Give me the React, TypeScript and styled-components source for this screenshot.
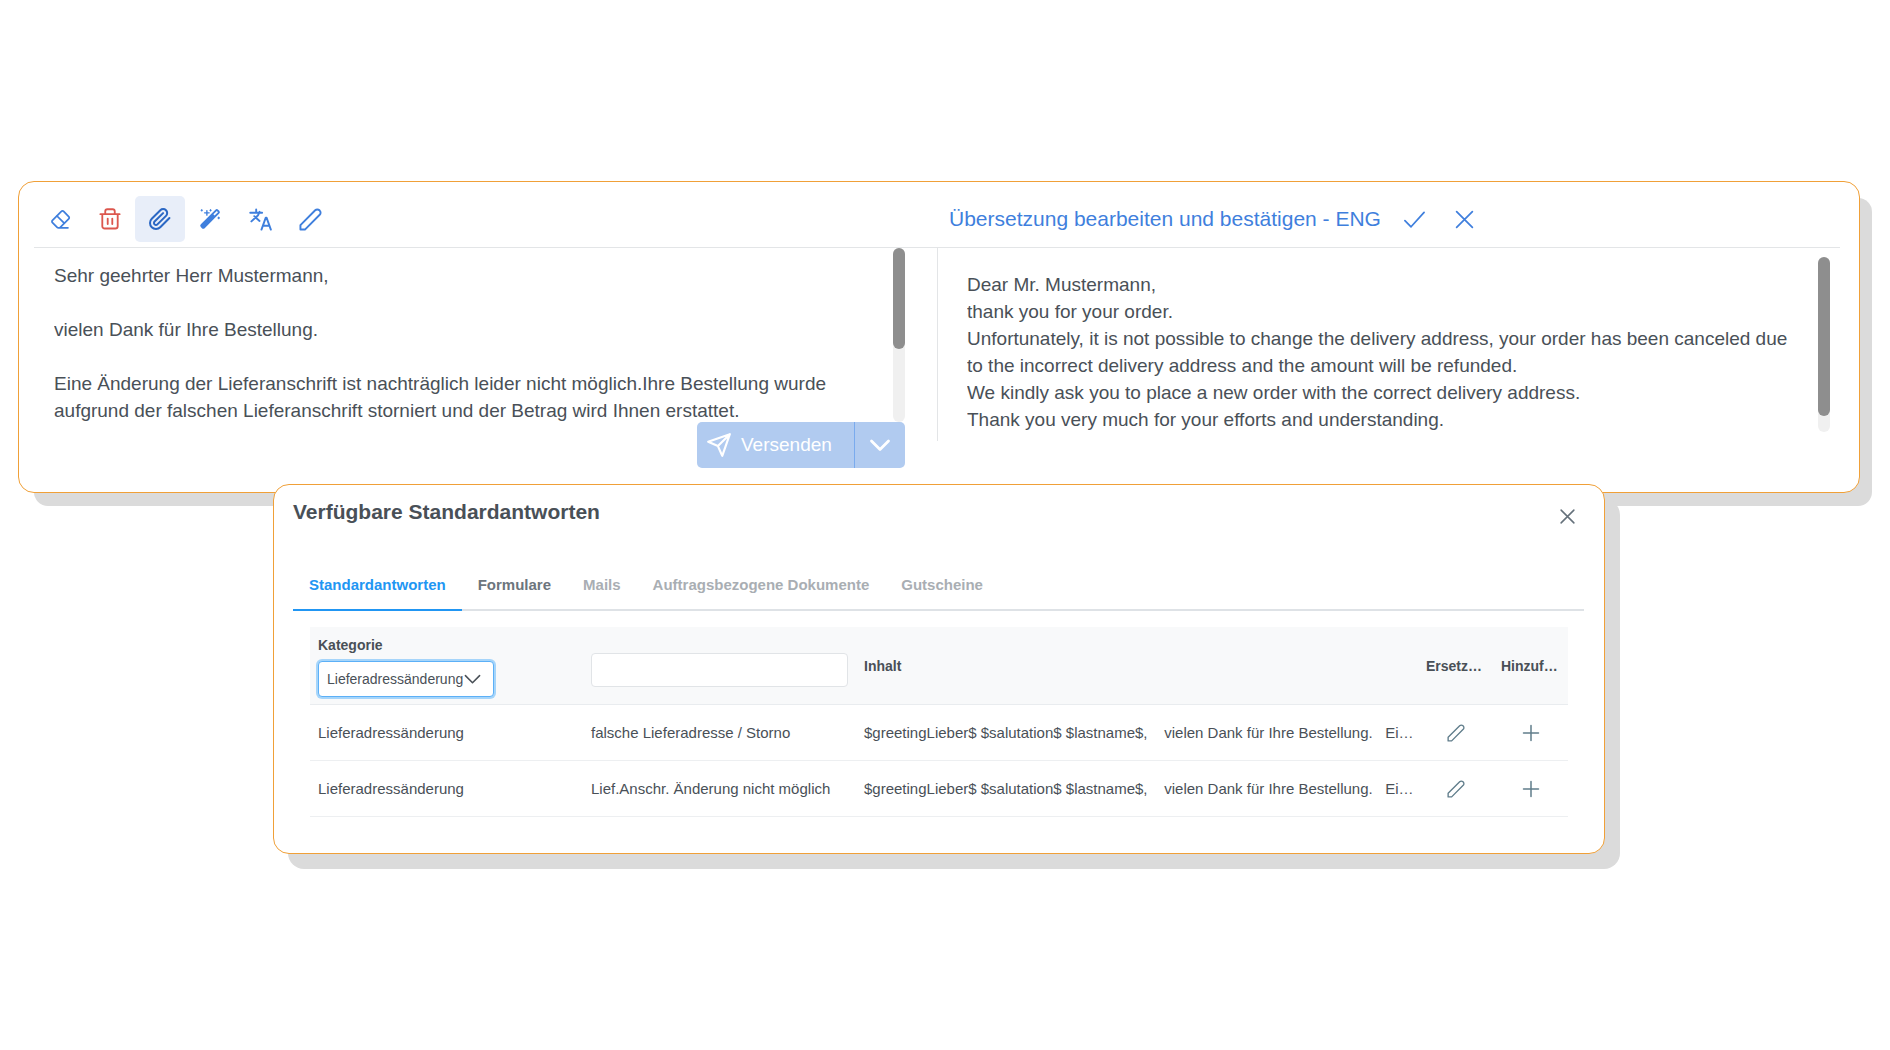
import React from "react";
import styled, { createGlobalStyle } from "styled-components";

const font = '"Liberation Sans", Arial, sans-serif';
const color = {
  text: "#495057",
  blue: "#3f7fdd",
  orange: "#f0a038",
  shadow: "#dbdbdb",
  rule: "#e3e5e7",
  steel: "#607d8b",
};

const GlobalStyle = createGlobalStyle`
  *, *::before, *::after { box-sizing: border-box; }
  body { margin: 0; background: #fff; color: ${color.text}; font-family: ${font}; }
  button, input, select, textarea { font: inherit; color: inherit; }
`;

const Page = styled.main`
  min-height: 100vh;
  padding: 181px 30px 40px 18px;
`;

const Card = styled.section`
  border: 1px solid ${color.orange};
  border-radius: 16px;
  background: #fff;
`;

const ReplyCard = styled(Card)`
  padding: 14px 19px 24px 15px;
  box-shadow: 14px 15px 0 -2px ${color.shadow};
`;

const SplitHeader = styled.header`
  display: grid;
  grid-template-columns: 1fr 1fr;
  padding-bottom: 5px;
  border-bottom: 1px solid ${color.rule};
`;

const Toolbar = styled.div`
  display: flex;
  padding-left: 1px;
`;

const ToolButton = styled.button<{ $active?: boolean; $tone?: string }>`
  display: flex;
  align-items: center;
  justify-content: center;
  width: 50px;
  height: 46px;
  padding: 0;
  border: 0;
  border-radius: 5px;
  background: ${(p) => (p.$active ? "#e8eef9" : "transparent")};
  color: ${(p) => p.$tone ?? color.blue};
`;

const TranslationBar = styled.div`
  display: flex;
  align-items: center;
  padding-left: 12px;
`;

const TranslationTitle = styled.h2`
  margin: 0 9px 0 0;
  font-size: 21px;
  line-height: 24px;
  font-weight: 400;
  color: ${color.blue};
`;

const SplitBody = styled.div`
  display: grid;
  grid-template-columns: 1fr 1fr;
  align-items: start;
`;

const SourcePane = styled.div`
  padding: 0 32px 0 20px;
`;

const TranslationPane = styled.div`
  display: flex;
  height: 193px;
  padding: 9px 10px 9px 29px;
  border-left: 1px solid ${color.rule};
`;

const ScrollRow = styled.div`
  display: flex;
  height: 174px;
`;

const MessageText = styled.textarea`
  flex: 1;
  min-width: 0;
  padding: 14px 16px 0 0;
  border: 0;
  outline: 0;
  resize: none;
  overflow: hidden;
  background: transparent;
  font-size: 19px;
  line-height: 27px;
`;

const ScrollTrack = styled.div`
  width: 12px;
  border-radius: 6px;
  background: #f0f0f0;
`;

const ScrollThumb = styled.div<{ $share: number }>`
  height: ${(p) => p.$share}%;
  border-radius: 6px;
  background: #8e8e8e;
`;

const SendGroup = styled.div`
  display: flex;
  justify-content: flex-end;
`;

const SendButton = styled.button`
  display: flex;
  align-items: center;
  gap: 9px;
  width: 157px;
  height: 46px;
  padding: 0 9px;
  border: 0;
  border-radius: 5px 0 0 5px;
  background: #b1cbf0;
  color: #fff;
  font-size: 19px;
`;

const SendMenuButton = styled.button`
  display: flex;
  align-items: center;
  justify-content: center;
  width: 51px;
  height: 46px;
  padding: 0;
  border: 0;
  border-left: 1px solid #7aabee;
  border-radius: 0 5px 5px 0;
  background: #b1cbf0;
  color: #fff;
`;

const TemplatesCard = styled(Card)`
  position: relative;
  max-width: 1332px;
  margin: -9px auto 0;
  padding: 15px 20px 36px 19px;
  box-shadow: 15px 15px 0 ${color.shadow};
`;

const DialogHeader = styled.header`
  display: flex;
  align-items: flex-start;
  justify-content: space-between;
`;

const DialogTitle = styled.h2`
  margin: 0;
  font-size: 21px;
  line-height: 24px;
  font-weight: 700;
`;

const CloseButton = styled.button`
  display: flex;
  align-items: center;
  justify-content: center;
  width: 34px;
  height: 32px;
  padding: 0;
  border: 0;
  background: transparent;
  color: #65717b;
`;

const TabList = styled.div`
  display: flex;
  margin-top: 24px;
  border-bottom: 2px solid #dee2e6;
`;

const Tab = styled.button<{ $state: "active" | "open" | "disabled" }>`
  margin-bottom: -2px;
  padding: 20px 16px 15px;
  border: 0;
  border-bottom: 2px solid ${(p) => (p.$state === "active" ? "#2196f3" : "transparent")};
  background: transparent;
  font-size: 15px;
  line-height: 18px;
  font-weight: 700;
  color: ${(p) => ({ active: "#2196f3", open: "#6c757d", disabled: "#a9aeb3" })[p.$state]};
`;

const TableWrap = styled.div`
  margin: 16px 16px 0 17px;
`;

const Table = styled.table`
  width: 100%;
  table-layout: fixed;
  border-collapse: separate;
  border-spacing: 0;
  font-size: 15px;
`;

const Col = styled.col<{ $width?: number }>`
  width: ${(p) => (p.$width ? `${p.$width}px` : "auto")};
`;

const HeadCell = styled.th`
  height: 78px;
  padding: 2px 8px 0;
  border-bottom: 1px solid #e9ecef;
  background: #f8f9fa;
  font-size: 14px;
  line-height: 17px;
  text-align: left;
  white-space: nowrap;
`;

const CategoryCell = styled(HeadCell)`
  padding: 10px 8px 7px;
`;

const SearchCell = styled(HeadCell)`
  padding-top: 9px;
`;

const CategoryLabel = styled.label`
  display: block;
  margin-bottom: 7px;
`;

const SelectBox = styled.div`
  display: flex;
  align-items: center;
  width: 176px;
  height: 36px;
  padding: 0 12px 0 8px;
  border: 1px solid #5cb0f7;
  border-radius: 4px;
  background: #fff;
  box-shadow: 0 0 0 2px #a6d5fa;
`;

const Select = styled.select`
  flex: 1;
  min-width: 0;
  padding: 0;
  border: 0;
  outline: 0;
  appearance: none;
  background: transparent;
  font-weight: 400;
`;

const SearchInput = styled.input`
  display: block;
  width: 100%;
  height: 34px;
  padding: 0 8px;
  border: 1px solid #e1e4e7;
  border-radius: 4px;
  background: #fff;
`;

const Cell = styled.td`
  height: 56px;
  padding: 0 8px;
  border-bottom: 1px solid #edeff1;
  white-space: pre;
`;

const RowButton = styled.button`
  display: flex;
  align-items: center;
  justify-content: center;
  width: 100%;
  height: 32px;
  padding: 0;
  border: 0;
  background: transparent;
  color: ${color.steel};
`;

type IconProps = { size?: number; stroke?: number; children: React.ReactNode };

const Icon = ({ size = 22, stroke = 2, children }: IconProps) => (
  <svg
    width={size}
    height={size}
    viewBox="0 0 24 24"
    fill="none"
    stroke="currentColor"
    strokeWidth={stroke}
    strokeLinecap="round"
    strokeLinejoin="round"
    aria-hidden="true"
  >
    {children}
  </svg>
);

const EraserIcon = () => (
  <Icon size={21} stroke={2}>
    <path d="M20.500 21.500H9.600a2 2 0 0 1-1.4-.6l-5.400-5.400a1.800 1.800 0 0 1 0-2.600L13 2.800a1.800 1.800 0 0 1 2.600 0l5.800 5.800a1.800 1.800 0 0 1 0 2.600L11.400 21.200" />
    <path d="m8 8 8.200 8.200" />
  </Icon>
);

const TrashIcon = () => (
  <Icon>
    <path d="M1.5 6.7h21M3.6 6.7v13.1a2.6 2.6 0 0 0 2.6 2.6h11.6a2.6 2.6 0 0 0 2.6-2.6V6.7M6.8 6.5V3.7a2.3 2.3 0 0 1 2.3-2.3h5.8a2.3 2.3 0 0 1 2.3 2.3v2.8" />
    <path d="M9.5 11.5v6M14.5 11.5v6" />
  </Icon>
);

const ClipIcon = () => (
  <Icon size={24} stroke={2}>
    <path d="m21.44 11.05-9.19 9.19a6 6 0 0 1-8.49-8.49l8.57-8.57A4 4 0 1 1 18 8.84l-8.59 8.57a2 2 0 0 1-2.83-2.83l8.49-8.48" />
  </Icon>
);

const WandIcon = () => (
  <Icon>
    <path
      d="M2 17.800 17.900 1.900a2.100 2.100 0 0 1 3 0l1.200 1.200a2.100 2.100 0 0 1 0 3L6.200 22a2.100 2.100 0 0 1-3 0L2 20.800a2.100 2.100 0 0 1 0-3Z"
      fill="currentColor"
      stroke="none"
    />
    <path d="m15.700 6.900 3.700-3.600 1.300 1.300-3.700 3.600Z" fill="#fff" stroke="none" />
    <path d="M8.600 2.800v5M6.100 5.300h5" strokeWidth={1.500} />
    <path d="M3 1.800v1.400M2.300 2.500h1.400M12.600 1.800v1.400M11.900 2.500h1.400M21.500 10v1.600M20.700 10.800h1.600" strokeWidth={1.200} />
  </Icon>
);

const TranslateIcon = () => (
  <Icon size={23}>
    <path d="m5.500 8.500 5.500 5M2.500 14l7-6.500 1.500-3.500M1.300 5h12.400M7.500 1.500V5M22.800 22.500l-4.500-12.500h-.8L13 22.500M14.800 18.500h6.300" />
  </Icon>
);

const PencilIcon = ({ size, stroke }: { size: number; stroke: number }) => (
  <Icon size={size} stroke={stroke}>
    <path d="M1.5 22.5v-4.7L16.9 2.4a3.1 3.1 0 0 1 4.400 0l.3.3a3.1 3.1 0 0 1 0 4.400L6.2 22.500Z" />
  </Icon>
);

const CrossIcon = ({ size, stroke }: { size: number; stroke: number }) => (
  <Icon size={size} stroke={stroke}>
    <path d="m3 3 18 18M21 3 3 21" />
  </Icon>
);

const rows = [
  "falsche Lieferadresse / Storno",
  "Lief.Anschr. Änderung nicht möglich",
];

const tabs = [
  { label: "Standardantworten", state: "active" },
  { label: "Formulare", state: "open" },
  { label: "Mails", state: "disabled" },
  { label: "Auftragsbezogene Dokumente", state: "disabled" },
  { label: "Gutscheine", state: "disabled" },
] as const;

const sourceText = `Sehr geehrter Herr Mustermann,

vielen Dank für Ihre Bestellung.

Eine Änderung der Lieferanschrift ist nachträglich leider nicht möglich.Ihre Bestellung wurde aufgrund der falschen Lieferanschrift storniert und der Betrag wird Ihnen erstattet.`;

const translatedText = `Dear Mr. Mustermann,
thank you for your order.
Unfortunately, it is not possible to change the delivery address, your order has been canceled due to the incorrect delivery address and the amount will be refunded.
We kindly ask you to place a new order with the correct delivery address.
Thank you very much for your efforts and understanding.`;

const excerpt = "$greetingLieber$ $salutation$ $lastname$,    vielen Dank für Ihre Bestellung.   Ei…";

export default function App() {
  return (
    <Page>
      <GlobalStyle />
      <ReplyCard>
        <SplitHeader>
          <Toolbar>
            <ToolButton aria-label="Leeren"><EraserIcon /></ToolButton>
            <ToolButton aria-label="Löschen" $tone="#dc574e"><TrashIcon /></ToolButton>
            <ToolButton aria-label="Anhang" $active $tone="#2a67c4"><ClipIcon /></ToolButton>
            <ToolButton aria-label="Assistent"><WandIcon /></ToolButton>
            <ToolButton aria-label="Übersetzen"><TranslateIcon /></ToolButton>
            <ToolButton aria-label="Bearbeiten"><PencilIcon size={23} stroke={2} /></ToolButton>
          </Toolbar>
          <TranslationBar>
            <TranslationTitle>Übersetzung bearbeiten und bestätigen - ENG</TranslationTitle>
            <ToolButton aria-label="Bestätigen">
              <Icon size={23} stroke={1.8}><path d="m2 13.2 6.4 6.4L22 4.6" /></Icon>
            </ToolButton>
            <ToolButton aria-label="Abbrechen"><CrossIcon size={21} stroke={2} /></ToolButton>
          </TranslationBar>
        </SplitHeader>
        <SplitBody>
          <SourcePane>
            <ScrollRow>
              <MessageText aria-label="Nachricht" spellCheck={false} defaultValue={sourceText} />
              <ScrollTrack><ScrollThumb $share={58} /></ScrollTrack>
            </ScrollRow>
            <SendGroup>
              <SendButton>
                <Icon size={26} stroke={2}><path d="m22 2-7 20-4-9-9-4ZM22 2 11 13" /></Icon>
                Versenden
              </SendButton>
              <SendMenuButton aria-label="Weitere Optionen">
                <Icon size={24} stroke={2.8}><path d="m3.5 8 8.5 8.5L20.5 8" /></Icon>
              </SendMenuButton>
            </SendGroup>
          </SourcePane>
          <TranslationPane>
            <MessageText aria-label="Übersetzung" spellCheck={false} defaultValue={translatedText} />
            <ScrollTrack><ScrollThumb $share={91} /></ScrollTrack>
          </TranslationPane>
        </SplitBody>
      </ReplyCard>

      <TemplatesCard>
        <DialogHeader>
          <DialogTitle>Verfügbare Standardantworten</DialogTitle>
          <CloseButton aria-label="Schließen"><CrossIcon size={17} stroke={2.2} /></CloseButton>
        </DialogHeader>
        <TabList role="tablist">
          {tabs.map((tab) => (
            <Tab
              key={tab.label}
              role="tab"
              aria-selected={tab.state === "active"}
              disabled={tab.state === "disabled"}
              $state={tab.state}
            >
              {tab.label}
            </Tab>
          ))}
        </TabList>
        <TableWrap>
          <Table>
            <colgroup>
              <Col $width={273} />
              <Col $width={273} />
              <Col />
              <Col $width={75} />
              <Col $width={75} />
            </colgroup>
            <thead>
              <tr>
                <CategoryCell>
                  <CategoryLabel htmlFor="category">Kategorie</CategoryLabel>
                  <SelectBox>
                    <Select id="category" defaultValue="Lieferadressänderung">
                      <option>Lieferadressänderung</option>
                    </Select>
                    <Icon size={17} stroke={2.2}><path d="m2 6.500 10 10L22 6.500" /></Icon>
                  </SelectBox>
                </CategoryCell>
                <SearchCell>
                  <SearchInput type="text" aria-label="Titel suchen" />
                </SearchCell>
                <HeadCell>Inhalt</HeadCell>
                <HeadCell>Ersetz…</HeadCell>
                <HeadCell>Hinzuf…</HeadCell>
              </tr>
            </thead>
            <tbody>
              {rows.map((title) => (
                <tr key={title}>
                  <Cell>Lieferadressänderung</Cell>
                  <Cell>{title}</Cell>
                  <Cell>{excerpt}</Cell>
                  <Cell>
                    <RowButton aria-label="Ersetzen"><PencilIcon size={18} stroke={1.8} /></RowButton>
                  </Cell>
                  <Cell>
                    <RowButton aria-label="Hinzufügen">
                      <Icon size={18} stroke={2}><path d="M12 2v20M2 12h20" /></Icon>
                    </RowButton>
                  </Cell>
                </tr>
              ))}
            </tbody>
          </Table>
        </TableWrap>
      </TemplatesCard>
    </Page>
  );
}
